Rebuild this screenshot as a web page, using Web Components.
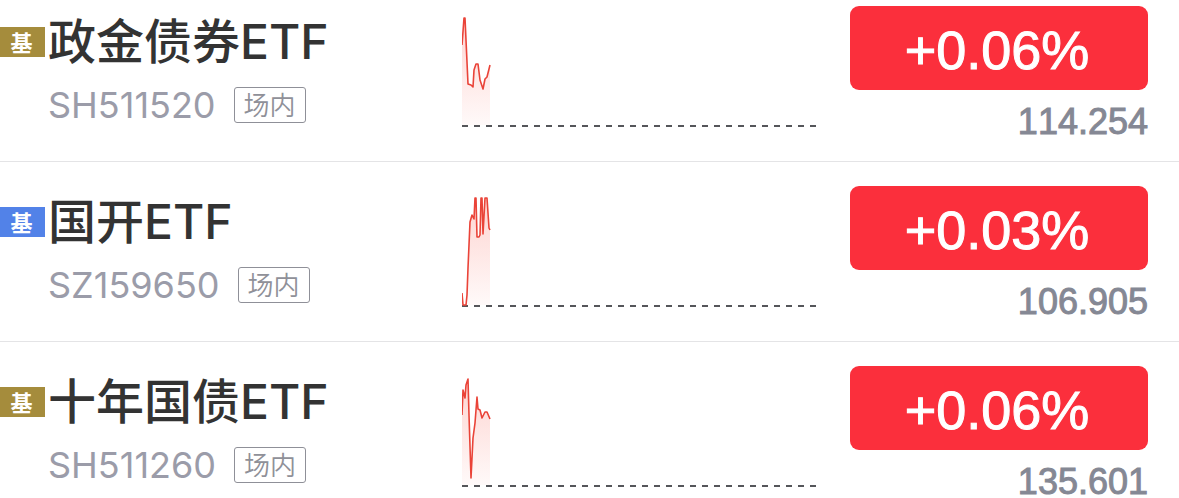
<!DOCTYPE html>
<html lang="zh-CN">
<head>
<meta charset="utf-8">
<meta name="viewport" content="width=device-width, initial-scale=1">
<title>场内基金</title>
<style>
  body { margin: 0; background: #fff; font-family: Inter, "Noto Sans CJK SC", sans-serif; }
</style>
</head>
<body>
<quote-list>
  <quote-row code="SH511520" kind="gold" change="+0.06%" price="114.254"
    points="0,39 2,12 3,12 6,78 9,79 11,81 12,64 14,58 16,58 18,74 21,83 23,73 25,71 28,59">政金债券ETF</quote-row>
  <quote-row code="SZ159650" kind="blue" change="+0.03%" price="106.905"
    points="0,107 1,119 4,119 5,109 6,82 8,36 10,29 12,33 13,12 14,12 15,51 17,51 18,49 19,12 20,12 21,48 23,12 25,12 27,42 28,44">国开ETF</quote-row>
  <quote-row code="SH511260" kind="gold" change="+0.06%" price="135.601"
    points="0,49 1,24 3,32 4,19 6,13 7,49 9,112 11,72 13,57 15,31 16,43 18,44 20,52 23,46 25,46 28,53">十年国债ETF</quote-row>
</quote-list>

<template id="list-template">
  <style>
    :host { display: block; padding-top: 6px; overflow: hidden; }
    ::slotted(quote-row:not(:first-child)) { padding-top: 24px; }
    ::slotted(quote-row:not(:last-child)) { padding-bottom: 23px; border-bottom: 1px solid #e4e4e6; }
  </style>
  <slot></slot>
</template>

<template id="row-template">
  <style>
    :host {
      display: grid;
      grid-template-columns: minmax(0, 428fr) minmax(0, 354fr) minmax(0, 298fr);
      column-gap: 34px;
      padding-right: 31px;
    }
    .info { display: grid; grid-template-columns: 45px 1fr; column-gap: 3px; align-content: start; align-items: center; }
    h2 { margin: 0; font-size: 48px; line-height: 72px; font-weight: 500; color: #333; white-space: nowrap; }
    .sub { grid-column: 2; display: flex; align-items: center; gap: 18px; padding-top: 9px; }
    .code { font-size: 36px; line-height: 36px; color: #9b9ca9; }
  </style>
  <div class="info">
    <fund-badge>基</fund-badge>
    <h2><slot></slot></h2>
    <div class="sub"><span class="code"></span><market-tag>场内</market-tag></div>
  </div>
  <spark-line></spark-line>
  <quote-value></quote-value>
</template>

<template id="badge-template">
  <style>
    :host {
      display: block; box-sizing: border-box; height: 30px; padding-right: 2px;
      background: #a58c3c; color: #fff; text-align: center;
      font: 700 22px/28px "Noto Sans CJK SC", sans-serif;
    }
    :host([kind="blue"]) { background: #5282e8; }
  </style>
  <slot></slot>
</template>

<template id="tag-template">
  <style>
    :host {
      display: block; box-sizing: border-box; height: 36px; padding: 0 9px; border: 1px solid #8f9098; border-radius: 3px;
      color: #8f9098; font: 350 26px/32px "Noto Sans CJK SC", sans-serif; white-space: nowrap;
    }
  </style>
  <slot></slot>
</template>

<template id="spark-template">
  <style>
    :host { display: block; }
    svg { display: block; width: 100%; height: 122px; }
    .line { fill: none; stroke: #ea4338; stroke-width: 1.6; stroke-linejoin: round; }
    .base { stroke: #55565a; stroke-width: 2; stroke-dasharray: 6 6; }
  </style>
  <svg viewBox="0 0 354 122" preserveAspectRatio="none" role="img" aria-label="分时走势">
    <defs>
      <linearGradient id="fade" x1="0" y1="0" x2="0" y2="1">
        <stop offset="0" stop-color="#fa4a3c" stop-opacity=".24"/>
        <stop offset="1" stop-color="#fa4a3c" stop-opacity=".03"/>
      </linearGradient>
    </defs>
    <polygon class="area" fill="url(#fade)"/>
    <line class="base" x1="0" y1="120" x2="354" y2="120"/>
    <polyline class="line"/>
  </svg>
</template>

<template id="value-template">
  <style>
    :host { display: block; font-family: "Liberation Sans", Arial, sans-serif; font-kerning: none; }
    button {
      display: block; width: 100%; height: 84px; margin: 0; padding: 4px 4px 0 0; border: 0;
      border-radius: 9px; background: #fb2f3c; color: #fff; font: inherit; font-kerning: none;
      font-size: 54px; line-height: 80px; -webkit-text-stroke: 1px #fff;
    }
    .price { display: block; margin-top: 16px; font-size: 36px; line-height: 32px; text-align: right; color: #858894; -webkit-text-stroke: 1px #858894; }
  </style>
  <button type="button"></button>
  <span class="price"></span>
</template>

<script>
  class TemplateElement extends HTMLElement {
    constructor() {
      super();
      this.attachShadow({ mode: "open" });
      const source = document.getElementById(this.constructor.template);
      this.shadowRoot.append(source.content.cloneNode(true));
    }
    part$(selector) { return this.shadowRoot.querySelector(selector); }
  }

  class FundBadge extends TemplateElement { static template = "badge-template"; }
  class MarketTag extends TemplateElement { static template = "tag-template"; }
  class QuoteList extends TemplateElement { static template = "list-template"; }

  class SparkLine extends TemplateElement {
    static template = "spark-template";
    static observedAttributes = ["points"];
    attributeChangedCallback(name, before, points) {
      const all = points.trim().split(/\s+/);
      const first = all[0].split(",")[0];
      const last = all[all.length - 1].split(",")[0];
      this.part$(".line").setAttribute("points", points);
      this.part$(".area").setAttribute("points", `${first},119 ${points} ${last},119`);
    }
  }

  class QuoteValue extends TemplateElement {
    static template = "value-template";
    static observedAttributes = ["change", "price"];
    attributeChangedCallback(name, before, value) {
      this.part$(name === "change" ? "button" : ".price").textContent = value;
    }
  }

  class QuoteRow extends TemplateElement {
    static template = "row-template";
    connectedCallback() {
      this.part$(".code").textContent = this.getAttribute("code");
      this.part$("fund-badge").setAttribute("kind", this.getAttribute("kind"));
      this.part$("spark-line").setAttribute("points", this.getAttribute("points"));
      this.part$("quote-value").setAttribute("change", this.getAttribute("change"));
      this.part$("quote-value").setAttribute("price", this.getAttribute("price"));
    }
  }

  customElements.define("fund-badge", FundBadge);
  customElements.define("market-tag", MarketTag);
  customElements.define("spark-line", SparkLine);
  customElements.define("quote-value", QuoteValue);
  customElements.define("quote-row", QuoteRow);
  customElements.define("quote-list", QuoteList);
</script>
</body>
</html>
